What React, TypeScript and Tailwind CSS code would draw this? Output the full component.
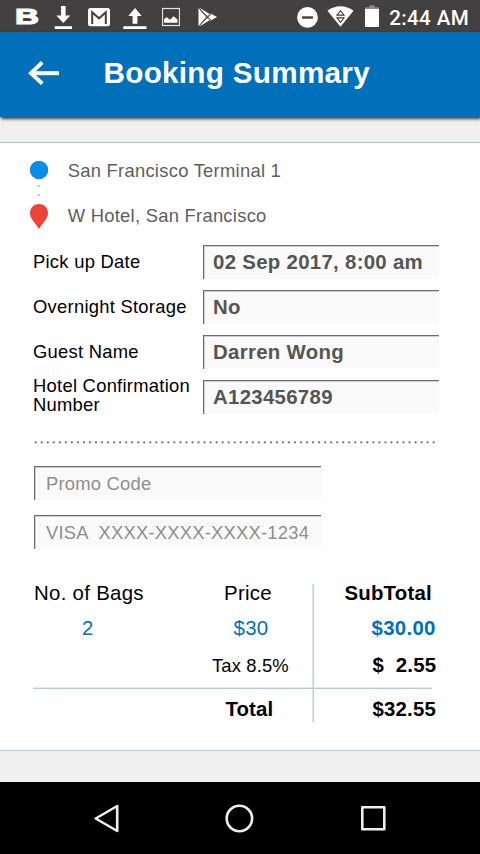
import type { ReactNode } from "react";

function Glyph({ x, w, children }: { x: number; w: number; children: ReactNode }) {
  return (
    <svg width={w} height={32} viewBox={`${x} 0 ${w} 32`} className="block shrink-0" fill="#fff">
      {children}
    </svg>
  );
}

function StatusBar() {
  return (
    <div className="flex h-8 items-center bg-[#424041] pl-[14px] pr-[11px]">
      <Glyph x={14} w={28}>
        <text
          x="0"
          y="0"
          transform="translate(14.9 24.4) scale(1.54 1)"
          fontFamily="Liberation Sans, Arial, sans-serif"
          fontWeight="700"
          fontSize="21.5"
          stroke="#fff"
          strokeWidth="1.1"
        >
          B
        </text>
      </Glyph>
      <div className="w-[12px]" />
      <Glyph x={54} w={19}>
        <path d="M61 6h4.600v9.500h4.700L63.300 23l-7-7.500H61zM54.700 26.300h17.300v2.600H54.700z" />
      </Glyph>
      <div className="w-[15px]" />
      <Glyph x={88} w={22}>
        <rect x="88" y="8" width="22" height="18.200" rx="2.500" />
        <path d="M92.200 24V12.200L99 18.300l6.800-6.100V24" fill="none" stroke="#424041" strokeWidth="2" />
      </Glyph>
      <div className="w-[13px]" />
      <Glyph x={123} w={24}>
        <path d="M135 8l6.700 8h-4.300v7.700h-4.800V16h-4.300zM123.300 26.300h23.200v2.600h-23.200z" />
      </Glyph>
      <div className="w-[15px]" />
      <Glyph x={162} w={18}>
        <rect x="162.500" y="8.500" width="17" height="17" fill="none" stroke="#e4e4e4" strokeWidth="1.200" />
        <path d="M164 22.800v-3.300l2.500-2.500 3.500 2.700 3.500-3.500 4 3.300v3.300z" />
      </Glyph>
      <div className="w-[17px]" />
      <Glyph x={197} w={21}>
        <path d="M198.500 8v18.200L206 17z" />
        <path d="M199.500 7.800l10 6.200-3 2.600zM199.500 26.400l10-6.200-3-2.600zM210.400 13.600l6.700 3.400-6.700 3.700-3.200-3.600z" />
        <path d="M200 9.400l11.200 11M200 24.800l11.200-11" stroke="#424041" strokeWidth=".9" />
      </Glyph>
      <div className="flex-1" />
      <Glyph x={296} w={21}>
        <circle cx="306.500" cy="17.400" r="10.400" />
        <path d="M301 16.300h11v2.400h-11z" fill="#424041" />
      </Glyph>
      <div className="w-[9px]" />
      <Glyph x={326} w={27}>
        <path d="M326.500 10.700C334 4.700 345 4.700 352.500 10.700L339.500 26.800z" />
        <path d="M339.500 10.700l3.500 4.400h-7zM336 17.900h7l-3.500 4.400z" fill="none" stroke="#424041" strokeWidth="1.100" />
      </Glyph>
      <div className="w-[11px]" />
      <Glyph x={364} w={14}>
        <path d="M368.500 5.300h5v2h4.500v3h-14v-3h4.500z" fill="#8a8989" />
        <path d="M364 9h14v18h-14z" />
      </Glyph>
      <span className="ml-[10.500px] mt-[3px] whitespace-nowrap font-['Roboto',sans-serif] text-[20.600px] font-medium leading-8 tracking-[0.350px] text-white">
        2:44 AM
      </span>
    </div>
  );
}

function Header() {
  return (
    <header className="relative flex h-[85px] items-center bg-[#0070ba] pb-[4px] pl-[28px] shadow-[1px_2px_3px_rgba(0,0,0,0.75)]">
      <svg width="32" height="24" viewBox="0 0 32 24" className="block" fill="none" stroke="#fff">
        <path d="M31 12.200H3" strokeWidth="4" />
        <path d="M14.300 1.400L3 12.200l11.300 10.400" strokeWidth="4" />
      </svg>
      <h1 className="ml-[43.500px] text-[29.700px] font-bold leading-[34px] tracking-[0.280px] text-white">Booking Summary</h1>
    </header>
  );
}

const box =
  "border-l border-t border-l-[#6c6c6c] border-t-[#6c6c6c] bg-[#fafafa] shadow-[inset_1px_1px_0_#cfcfcf]";

function Field({ label, value }: { label: ReactNode; value: string }) {
  return (
    <div className="flex h-[34px] items-center">
      <div className="w-[170px] whitespace-nowrap pb-[2px] text-[18.400px] leading-[19px] tracking-[0.260px] text-black">
        {label}
      </div>
      <div
        className={`${box} h-[34px] w-[236px] whitespace-nowrap pl-[9px] text-[20.400px] font-bold leading-[32px] tracking-[0.300px] text-[#555]`}
      >
        {value}
      </div>
    </div>
  );
}

function Payment({ text }: { text: string }) {
  return (
    <div
      className={`${box} h-[34px] w-[287px] whitespace-pre pl-[11px] text-[18.400px] leading-[34px] tracking-[0.220px] text-[#8e8e8e]`}
    >
      {text}
    </div>
  );
}

function Trip() {
  return (
    <section className="flex h-[102px] pl-[30px] pt-[18px]">
      <svg width="18" height="70" viewBox="0 0 18 70" className="block shrink-0">
        <circle cx="9" cy="9" r="9.200" fill="#0a8de8" />
        <g fill="#a9cbe2">
          <rect x="7.500" y="24" width="2.200" height="2" />
          <rect x="7.500" y="33" width="2.200" height="2" />
        </g>
        <path d="M9 43c5.300 0 9 4.100 9 9.200 0 5.800-5.500 9.300-9 15.800-3.500-6.500-9-10-9-15.800C0 47.100 3.700 43 9 43z" fill="#ef4136" />
      </svg>
      <div className="ml-[19.700px] text-[18.400px] leading-[45px] tracking-[0.260px] text-[#5e5e5e]">
        <p className="-mt-[13.500px]">San Francisco Terminal 1</p>
        <p>W Hotel, San Francisco</p>
      </div>
    </section>
  );
}

function Totals() {
  return (
    <section className="ml-[33px] mt-[35px] flex h-[138px] w-[404px] whitespace-pre text-[20.400px] tracking-[0.300px] text-black">
      <div className="flex w-[281px] flex-col border-r border-[#b9d0e0] shadow-[inset_-1px_0_0_#d9e6ef]">
        <div className="flex pl-px leading-[19px]">
          <span className="w-[190px]">No. of Bags</span>
          <span>Price</span>
        </div>
        <div className="flex leading-[51px] text-[#0070ba]">
          <span className="w-[152px] pl-[49px]">2</span>
          <span className="pl-[48.500px]">$30</span>
        </div>
        <div className="pl-[179px] text-[18.400px] leading-[23px] tracking-[0.150px]">Tax 8.5%</div>
        <div className="mt-[10px] h-[2px] border-b border-[#b0cde0] bg-[#dfebf2]" />
        <div className="mt-[8px] pl-[192.500px] font-bold leading-[24px] tracking-[0.100px]">Total</div>
      </div>
      <div className="flex w-[123px] flex-col font-bold">
        <div className="pl-[30.500px] leading-[19px] tracking-[0.200px]">SubTotal</div>
        <div className="pl-[57.500px] leading-[51px] text-[#0070ba]">$30.00</div>
        <div className="pl-[58.500px] leading-[22px] tracking-[0.200px]">{"$  2.55"}</div>
        <div className="mt-[11px] h-[2px] w-[118px] border-b border-[#b0cde0] bg-[#dfebf2]" />
        <div className="mt-[8px] pl-[58.500px] leading-[24px] tracking-[0.200px]">$32.55</div>
      </div>
    </section>
  );
}

function NavBar() {
  return (
    <nav className="flex h-[72px] items-center bg-black pl-[93px]">
      <svg width="28" height="30" viewBox="0 0 28 30" fill="none" stroke="#eee" strokeWidth="2.600" strokeLinejoin="round">
        <path d="M24.200 3v25L2.700 15.500z" />
      </svg>
      <svg width="30" height="30" viewBox="0 0 30 30" className="ml-[103px]" fill="none" stroke="#eee" strokeWidth="2.600">
        <circle cx="15.400" cy="15.500" r="12.700" />
      </svg>
      <svg width="28" height="28" viewBox="0 0 28 28" className="ml-[105px]" fill="none" stroke="#eee" strokeWidth="2.600" strokeLinejoin="round">
        <rect x="3.300" y="3.300" width="22" height="22" />
      </svg>
    </nav>
  );
}

export default function App() {
  return (
    <div className="flex h-[854px] w-[480px] flex-col overflow-hidden bg-[#f0f0f0] font-['Liberation_Sans',Arial,sans-serif]">
      <StatusBar />
      <Header />
      <main className="mt-[25px] h-[609px] border-y border-[#a9cbe2] bg-white">
        <Trip />
        <section className="flex flex-col gap-[11px] pl-[33px]">
          <Field label="Pick up Date" value="02 Sep 2017, 8:00 am" />
          <Field label="Overnight Storage" value="No" />
          <Field label="Guest Name" value="Darren Wong" />
          <Field
            label={
              <div className="-mt-[2px]">
                Hotel Confirmation
                <br />
                Number
              </div>
            }
            value="A123456789"
          />
        </section>
        <svg width="408" height="4" viewBox="0 0 408 4" className="ml-[33px] mt-[26px] block">
          <path d="M2.700 2.300H403.500" stroke="#6f6f6f" strokeWidth="2.300" strokeLinecap="round" strokeDasharray="0 6.030" />
        </svg>
        <section className="mt-[22px] flex flex-col gap-[15px] pl-[34px]">
          <Payment text="Promo Code" />
          <Payment text="VISA  XXXX-XXXX-XXXX-1234" />
        </section>
        <Totals />
      </main>
      <div className="flex-1" />
      <NavBar />
    </div>
  );
}
